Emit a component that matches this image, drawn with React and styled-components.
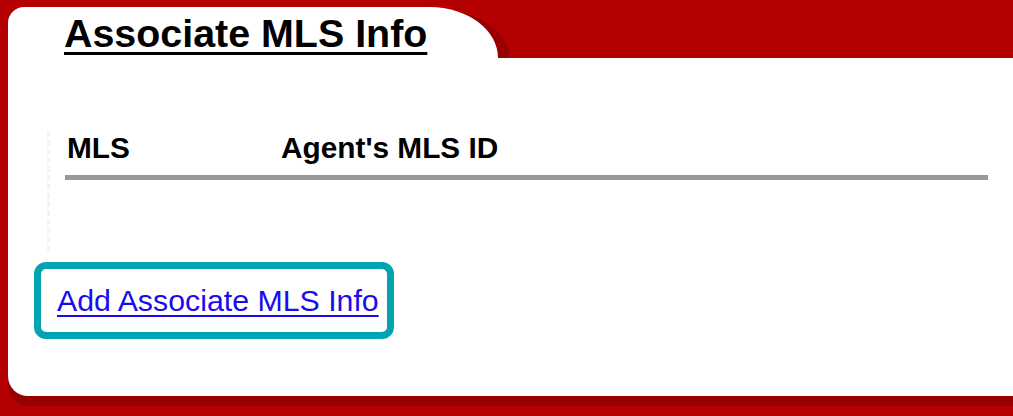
import React from "react";
import styled, { createGlobalStyle } from "styled-components";

const Global = createGlobalStyle`
  html, body { margin: 0; padding: 0; }
  body {
    background: #b40000;
    font-family: "Liberation Sans", Arial, sans-serif;
    overflow: hidden;
  }
`;

const Page = styled.div`
  height: 416px;
  padding: 7px 0 0 8px;
  box-sizing: border-box;
  background: #b40000;
`;

const Tab = styled.div`
  width: 490px;
  height: 51px;
  box-sizing: border-box;
  padding: 4px 0 0 56px;
  background: #fff;
  border-top-left-radius: 16px;
  border-top-right-radius: 68px 51px;
  box-shadow: 12px 3px 0 #980000;
`;

const Title = styled.h1`
  margin: 0;
  font-size: 39.4px;
  line-height: 45px;
  font-weight: bold;
  color: #000;
  text-decoration: underline;
  text-decoration-thickness: 3px;
  text-underline-offset: 5px;
  white-space: nowrap;
`;

const Body = styled.div`
  height: 338px;
  box-sizing: border-box;
  padding-top: 73px;
  background: #fff;
  border-bottom-left-radius: 20px;
  box-shadow: 0 10px 0 #960000;
`;

const TableArea = styled.div`
  margin: 0 25px 0 39px;
  padding-left: 15px;
  border-left: 3px dashed #f3f3f3;
  height: 120px;
  box-sizing: border-box;
`;

const HeaderRow = styled.div`
  display: grid;
  grid-template-columns: 214px 1fr;
  padding: 0 0 10px 2px;
  border-bottom: 5px solid #999;
`;

const HeaderCell = styled.div`
  font-size: 29.8px;
  line-height: 34px;
  font-weight: bold;
  color: #000;
  white-space: nowrap;
`;

const AddBox = styled.div`
  display: inline-block;
  margin: 11px 0 0 26px;
  padding: 14px 8px 14px 16px;
  border: 7px solid #03a3b1;
  border-radius: 12px;
  background: #fff;
`;

const AddLink = styled.a`
  font-size: 30.3px;
  line-height: 35px;
  color: #1a0cf0;
  text-decoration: underline;
  text-decoration-thickness: 2px;
  text-underline-offset: 4px;
  white-space: nowrap;
  display: block;
`;

export default function App() {
  return (
    <>
      <Global />
      <Page>
        <Tab>
          <Title>Associate MLS Info</Title>
        </Tab>
        <Body>
          <TableArea>
            <HeaderRow>
              <HeaderCell>MLS</HeaderCell>
              <HeaderCell>Agent's MLS ID</HeaderCell>
            </HeaderRow>
          </TableArea>
          <AddBox>
            <AddLink href="#">Add Associate MLS Info</AddLink>
          </AddBox>
        </Body>
      </Page>
    </>
  );
}
